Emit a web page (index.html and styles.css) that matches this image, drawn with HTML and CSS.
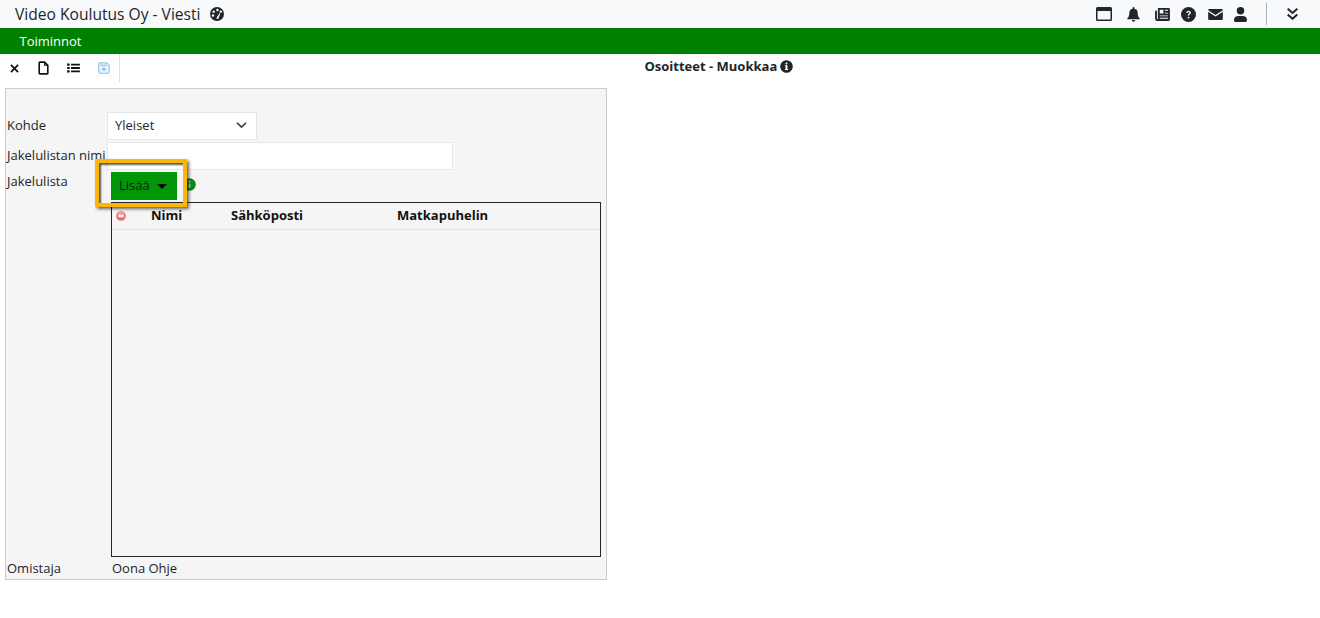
FILE: index.html
```html
<!DOCTYPE html>
<html lang="fi">
<head>
<meta charset="utf-8">
<title>Viesti</title>
<link rel="stylesheet" href="styles.css">
</head>
<body>
<header class="topbar">
  <div class="brand">
    <span class="brand-title">Video Koulutus Oy - Viesti</span>
    <svg class="brand-icon" viewBox="0 0 16 16"><circle cx="8" cy="8" r="8" fill="#212529"/><circle cx="8.500" cy="3.500" r="1.400" fill="#f8f9fa"/><circle cx="4.200" cy="5.300" r="1.400" fill="#f8f9fa"/><circle cx="12.300" cy="5.300" r="1.400" fill="#f8f9fa"/><circle cx="3.400" cy="9.600" r="1.400" fill="#f8f9fa"/><path d="M7 13 10.800 7l.9.6L9.400 13.600z" fill="#f8f9fa"/></svg>
  </div>
  <div class="top-icons">
    <svg class="ti ti-win" viewBox="0 0 16 14"><path fill-rule="evenodd" d="M1.500 0h13A1.500 1.500 0 0 1 16 1.500v11a1.500 1.500 0 0 1-1.500 1.500h-13A1.500 1.500 0 0 1 0 12.500v-11A1.500 1.500 0 0 1 1.500 0zM1.500 4v8.500h13V4z" fill="#212529"/></svg>
    <svg class="ti ti-bell" viewBox="0 0 14 16"><path d="M7 0a1 1 0 0 1 1 1v.7A4.500 4.500 0 0 1 11.500 6c0 4 1.300 5.200 2.200 6.200.3.400 0 .8-.4.800H.7c-.4 0-.7-.4-.4-.8C1.200 11.200 2.500 10 2.500 6A4.500 4.500 0 0 1 6 1.700V1a1 1 0 0 1 1-1zM5.300 14h3.400a1.700 1.700 0 0 1-3.400 0z" fill="#212529"/></svg>
    <svg class="ti ti-news" viewBox="0 0 16 14"><path fill-rule="evenodd" d="M3.500 0h11A1.500 1.500 0 0 1 16 1.500v11a1.500 1.500 0 0 1-1.500 1.500h-12A2.500 2.500 0 0 1 0 11.500V3h2v8.500a.5.500 0 0 0 1 0V.5A.5.500 0 0 1 3.500 0zM5 2v4h4V2zM10.500 2v1H14V2zM10.500 5v1H14V5zM5 8v1h9V8zM5 10.500v1h9v-1z" fill="#212529"/></svg>
    <svg class="ti ti-help" viewBox="0 0 16 16"><circle cx="8" cy="8" r="8" fill="#212529"/><path d="M5.600 6.200C5.700 4.800 6.800 4 8.100 4c1.400 0 2.400.9 2.400 2.100 0 1-.6 1.500-1.200 1.900-.5.300-.6.500-.6 1.100H7.200c0-1 .3-1.500 1-2 .5-.3.800-.6.800-1 0-.5-.4-.8-.9-.8-.6 0-1 .4-1.100 1z" fill="#f8f9fa"/><circle cx="8" cy="11.300" r="1" fill="#f8f9fa"/></svg>
    <svg class="ti ti-mail" viewBox="0 0 16 12"><path d="M1.500 0h13c.8 0 1.500.6 1.500 1.300L8 6.500 0 1.300C0 .6.700 0 1.500 0zM0 3l7.500 4.900c.3.200.7.200 1 0L16 3v7.500c0 .8-.7 1.500-1.500 1.500h-13C.7 12 0 11.300 0 10.500z" fill="#212529"/></svg>
    <svg class="ti ti-user" viewBox="0 0 14 16"><circle cx="7" cy="4" r="4" fill="#212529"/><path d="M4.500 9.500h5A4.500 4.500 0 0 1 14 14v.5a1.500 1.500 0 0 1-1.500 1.500h-11A1.500 1.500 0 0 1 0 14.500V14a4.500 4.500 0 0 1 4.500-4.500z" fill="#212529"/></svg>
    <span class="top-sep"></span>
    <svg class="ti ti-chev" viewBox="0 0 11 12"><path d="M.7.800 5.500 5l4.800-4.200M.7 6.600l4.800 4.200 4.800-4.200" fill="none" stroke="#212529" stroke-width="2"/></svg>
  </div>
</header>
<nav class="menubar"><span class="menu-item">Toiminnot</span></nav>
<div class="toolbar-row">
  <div class="toolbar">
    <svg class="tool tool-x" viewBox="0 0 10 10"><path d="M1 1l8 8M9 1 1 9" stroke="#111" stroke-width="2" fill="none"/></svg>
    <svg class="tool tool-doc" viewBox="0 0 10 13"><path d="M1 1.700c0-.4.300-.7.700-.7H6l3 3v7.300c0 .4-.3.700-.7.700H1.700c-.4 0-.7-.3-.7-.7z" fill="#fff" stroke="#111" stroke-width="1.500"/><path d="M6 1v3h3" fill="none" stroke="#111" stroke-width="1"/></svg>
    <svg class="tool tool-list" viewBox="0 0 14 11"><path d="M0 .5h2.800v2.400H0zM0 4.300h2.800v2.400H0zM0 8.100h2.800v2.400H0zM4.300 .7h9.700v2H4.300zM4.300 4.500h9.700v2H4.300zM4.300 8.300h9.700v2H4.300z" fill="#111"/></svg>
    <svg class="tool tool-save" viewBox="0 0 12 12"><path d="M1.500.7h7.300l2.500 2.500v6.600c0 .8-.7 1.500-1.500 1.500H2c-.8 0-1.300-.7-1.300-1.500V1.500c0-.5.300-.8.800-.8z" fill="#e3f2fb" stroke="#8cc8ec" stroke-width="1.100"/><path d="M3 1v2.500h5V1" fill="none" stroke="#8cc8ec"/><circle cx="6" cy="7.200" r="1.400" fill="#6db9e8"/></svg>
  </div>
  <div class="page-title">
    <span>Osoitteet - Muokkaa</span>
    <svg class="info-dark" viewBox="0 0 14 14"><circle cx="7" cy="7" r="6.800" fill="#212529"/><rect x="6" y="5.800" width="2" height="4.600" fill="#fff"/><rect x="5.200" y="9.700" width="3.600" height="1.100" fill="#fff"/><rect x="5.200" y="5.800" width="2.500" height="1" fill="#fff"/><circle cx="7" cy="3.800" r="1.100" fill="#fff"/></svg>
  </div>
</div>
<main class="panel">
  <div class="row row-kohde">
    <label class="lbl lbl-raised">Kohde</label>
    <div class="select"><span>Yleiset</span>
      <svg class="select-chev" viewBox="0 0 12 8"><path d="M1 1.500 6 6.300l5-4.800" fill="none" stroke="#343a40" stroke-width="1.700"/></svg>
    </div>
  </div>
  <div class="row row-name">
    <label class="lbl lbl-raised">Jakelulistan nimi</label>
    <div class="input"></div>
  </div>
  <div class="row row-list">
    <label class="lbl lbl-list">Jakelulista</label>
    <div class="list-area">
      <div class="btn-line">
        <button class="add-btn">Lisää<span class="caret"></span></button>
        <svg class="info-green" viewBox="0 0 14 14"><circle cx="7" cy="7" r="6.800" fill="#0a8a1a"/><rect x="6" y="6" width="2" height="4.500" fill="#b9d9a0"/><circle cx="7" cy="3.900" r="1.100" fill="#b9d9a0"/></svg>
        <span class="highlight"></span>
      </div>
      <div class="table">
        <div class="thead">
          <svg class="minus" viewBox="0 0 12 12"><circle cx="6" cy="6" r="5.800" fill="#e8746c"/><circle cx="6" cy="4.500" r="3.800" fill="#f2a39c"/><rect x="2.800" y="5" width="6.400" height="2" fill="#fff"/></svg>
          <span class="th th-name">Nimi</span>
          <span class="th th-mail">Sähköposti</span>
          <span class="th">Matkapuhelin</span>
        </div>
      </div>
    </div>
  </div>
  <div class="row row-owner">
    <label class="lbl">Omistaja</label>
    <span class="owner">Oona Ohje</span>
  </div>
</main>
</body>
</html>
```
FILE: styles.css
```css
* { box-sizing: border-box; }
html, body { margin: 0; padding: 0; }
body {
  width: 1320px;
  height: 618px;
  overflow: hidden;
  background: #fff;
  color: #212529;
  font-family: "Open Sans", sans-serif;
  font-size: 13px;
}
.topbar {
  height: 28px;
  background: #f8f9fa;
  display: flex;
  align-items: center;
  justify-content: space-between;
  padding-left: 15px;
}
.brand { display: flex; align-items: center; }
.brand-title { font-size: 15.6px; line-height: 28px; color: #212529; }
.brand-icon { width: 14px; height: 14px; margin-left: 9px; }
.top-icons { display: flex; align-items: center; height: 28px; }
.ti { display: block; flex: none; }
.ti-win { width: 16px; height: 14px; margin-right: 15px; }
.ti-bell { width: 13px; height: 15px; margin-right: 15px; }
.ti-news { width: 15px; height: 13px; margin-right: 11px; }
.ti-help { width: 15px; height: 15px; margin-right: 12px; }
.ti-mail { width: 15px; height: 11px; margin-right: 11px; }
.ti-user { width: 13px; height: 15px; margin-right: 19px; }
.top-sep { width: 1px; height: 22px; background: #adb5bd; margin-right: 20px; }
.ti-chev { width: 11px; height: 12px; margin-right: 22px; }
.menubar {
  height: 26px;
  background: #008000;
  color: #fff;
  padding-left: 19.500px;
  line-height: 26px;
  font-size: 13px;
}
.menu-item { font-weight: 500; }
.toolbar-row {
  height: 28px;
  display: flex;
}
.toolbar {
  width: 120px;
  height: 28px;
  border-right: 1px solid #dee2e6;
  display: flex;
  align-items: center;
  padding: 0 0 0 10px;
}
.tool { display: block; flex: none; }
.tool-x { width: 9px; height: 9px; margin-right: 19px; }
.tool-doc { width: 11px; height: 14px; margin-right: 18px; }
.tool-list { width: 13px; height: 10px; margin-right: 18px; }
.tool-save { width: 12px; height: 12px; }
.page-title {
  margin-left: 524.500px;
  height: 24px;
  display: flex;
  align-items: center;
  font-weight: 700;
  font-size: 13px;
  color: #212529;
}
.info-dark { width: 13px; height: 13px; margin-left: 3px; }
.panel {
  width: 602px;
  height: 492px;
  margin: 6px 0 0 5px;
  border: 1px solid #ccc;
  background: #f5f5f5;
  padding-top: 23px;
  color: #212529;
}
.row { display: flex; }
.lbl { width: 101px; flex: none; padding-left: 1px; }
.lbl-raised { padding-bottom: 2px; }
.row-kohde { height: 28px; align-items: center; }
.select {
  width: 150px;
  height: 28px;
  background: #fff;
  border: 1px solid #e5e8eb;
  display: flex;
  align-items: center;
  justify-content: space-between;
  padding: 0 9px 2px 7px;
}
.select-chev { width: 11px; height: 8px; }
.row-name { height: 28px; margin-top: 2px; align-items: center; }
.input {
  width: 346px;
  height: 28px;
  background: #fff;
  border: 1px solid #e5e8eb;
}
.row-list { height: 387px; }
.lbl-list { padding-top: 1px; line-height: 20px; }
.list-area {
  margin-left: 4px;
  width: 490px;
  display: flex;
  flex-direction: column;
}
.btn-line {
  height: 32px;
  position: relative;
  display: flex;
  align-items: flex-start;
}
.add-btn {
  width: 66px;
  height: 28px;
  margin-top: 2px;
  background: #009607;
  border: 0;
  padding: 0 0 2px 8px;
  color: #0f1f0f;
  font: 13px "Open Sans", sans-serif;
  display: flex;
  align-items: center;
}
.caret {
  width: 0;
  height: 0;
  margin-left: 7px;
  margin-top: 2px;
  border-left: 5px solid transparent;
  border-right: 5px solid transparent;
  border-top: 5px solid #0a0a0a;
}
.info-green { width: 13px; height: 13px; margin: 8px 0 0 6px; }
.highlight {
  position: absolute;
  left: -16px;
  top: -11px;
  width: 92px;
  height: 48px;
  border: 4px solid #fbb608;
  box-shadow: inset 2px 2px 2px rgba(0,0,0,.65), 2px 2px 3px rgba(0,0,0,.6);
}
.table {
  height: 355px;
  border: 1px solid #212529;
}
.thead {
  height: 27px;
  border-bottom: 1px solid #e2e4e6;
  display: flex;
  align-items: center;
  padding: 0 0 2px 4px;
  font-weight: 700;
  color: #111;
}
.minus { width: 10px; height: 10px; flex: none; margin-right: 25px; margin-top: 1px; }
.th { display: block; }
.th-name { width: 80px; }
.th-mail { width: 166px; }
.row-owner { height: 22px; align-items: center; }
.owner { margin-left: 5px; }
```
